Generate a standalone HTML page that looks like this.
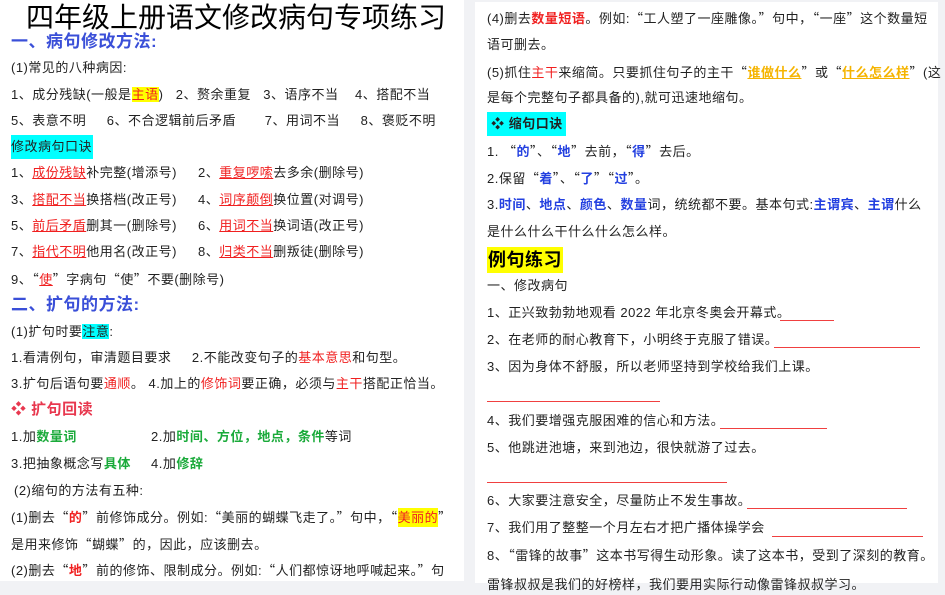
<!DOCTYPE html>
<html><head><meta charset="utf-8"><style>
body{margin:0;width:945px;height:581px;background:#f1f2f5;overflow:hidden;position:relative;font-family:"Liberation Sans","Noto Sans CJK SC",sans-serif;color:#222;}
.pg{position:absolute;background:#fff;top:0;height:581px}
.l{position:absolute;white-space:nowrap;font-size:13px;line-height:20px;height:20px;letter-spacing:0.5px}
.q{font-family:"Noto Sans CJK SC",sans-serif}
.r{color:#f02020}.u{text-decoration:underline}
.b{color:#2340e0;font-weight:bold}.g{color:#1aaa3a;font-weight:bold}
.y{color:#f5b400;font-weight:bold;text-decoration:underline}
.hl{background:#ffff00}.cy{background:#00ffff}
.h{color:#3a4fd8;font-weight:bold;font-size:17px}
.ln{position:absolute;height:1px;background:#f04040}
</style></head><body>
<div class="pg" style="left:0;width:464px"></div>
<div class="pg" style="left:475px;width:463px;top:2px"></div>

<div class="l" style="left:26px;top:2px;font-size:28px;line-height:32px;height:32px;color:#000;letter-spacing:0">四年级上册语文修改病句专项练习</div>
<div class="l h" style="left:11px;top:31px;line-height:22px">一、病句修改方法:</div>
<div class="l" style="left:11px;top:58px">(1)常见的八种病因:</div>
<div class="l" style="left:11px;top:85px">1、成分残缺(一般是<span class="hl r">主语</span>)&nbsp;&nbsp;&nbsp;2、赘余重复&nbsp;&nbsp;&nbsp;3、语序不当&nbsp;&nbsp;&nbsp;&nbsp;4、搭配不当</div>
<div class="l" style="left:11px;top:111px">5、表意不明&nbsp;&nbsp;&nbsp;&nbsp;&nbsp;6、不合逻辑前后矛盾&nbsp;&nbsp;&nbsp;&nbsp;&nbsp;&nbsp;&nbsp;7、用词不当&nbsp;&nbsp;&nbsp;&nbsp;&nbsp;8、褒贬不明</div>
<div class="l cy" style="left:11px;top:135px;height:24px;line-height:24px;padding-right:1px">修改病句口诀</div>
<div class="l" style="left:11px;top:163px">1、<span class="r u">成份残缺</span>补完整(增添号)</div>
<div class="l" style="left:198px;top:163px">2、<span class="r u">重复啰嗦</span>去多余(删除号)</div>
<div class="l" style="left:11px;top:190px">3、<span class="r u">搭配不当</span>换搭档(改正号)</div>
<div class="l" style="left:198px;top:190px">4、<span class="r u">词序颠倒</span>换位置(对调号)</div>
<div class="l" style="left:11px;top:216px">5、<span class="r u">前后矛盾</span>删其一(删除号)</div>
<div class="l" style="left:198px;top:216px">6、<span class="r u">用词不当</span>换词语(改正号)</div>
<div class="l" style="left:11px;top:242px">7、<span class="r u">指代不明</span>他用名(改正号)</div>
<div class="l" style="left:198px;top:242px">8、<span class="r u">归类不当</span>删叛徒(删除号)</div>
<div class="l" style="left:11px;top:269px">9、<span class="q">“</span><span class="r u">使</span><span class="q">”</span>字病句<span class="q">“</span>使<span class="q">”</span>不要(删除号)</div>
<div class="l h" style="left:11px;top:294px;line-height:22px">二、扩句的方法:</div>
<div class="l" style="left:11px;top:322px">(1)扩句时要<span class="cy">注意</span>:</div>
<div class="l" style="left:11px;top:348px">1.看清例句，审清题目要求&nbsp;&nbsp;&nbsp;&nbsp;&nbsp;2.不能改变句子的<span class="r">基本意思</span>和句型。</div>
<div class="l" style="left:11px;top:374px">3.扩句后语句要<span class="r">通顺</span>。&nbsp;4.加上的<span class="r">修饰词</span>要正确，必须与<span class="r">主干</span>搭配正恰当。</div>
<div class="l" style="left:11px;top:400px;font-size:15px;color:#e8384f;font-weight:bold">❖ 扩句回读</div>
<div class="l" style="left:11px;top:427px">1.加<span class="g">数量词</span></div>
<div class="l" style="left:151px;top:427px">2.加<span class="g">时间、方位，地点，条件</span>等词</div>
<div class="l" style="left:11px;top:454px">3.把抽象概念写<span class="g">具体</span></div>
<div class="l" style="left:151px;top:454px">4.加<span class="g">修辞</span></div>
<div class="l" style="left:14px;top:481px">(2)缩句的方法有五种:</div>
<div class="l" style="left:11px;top:507px">(1)删去<span class="q">“</span><span class="r" style="font-weight:bold">的</span><span class="q">”</span>前修饰成分。例如:<span class="q">“</span>美丽的蝴蝶飞走了。<span class="q">”</span>句中，<span class="q">“</span><span class="hl r" style="padding:2px 0">美丽的</span><span class="q">”</span></div>
<div class="l" style="left:11px;top:534px">是用来修饰<span class="q">“</span>蝴蝶<span class="q">”</span>的，因此，应该删去。</div>
<div class="l" style="left:11px;top:560px">(2)删去<span class="q">“</span><span class="r" style="font-weight:bold">地</span><span class="q">”</span>前的修饰、限制成分。例如:<span class="q">“</span>人们都惊讶地呼喊起来。<span class="q">”</span>句</div>

<div class="l" style="left:487px;top:8px">(4)删去<span class="r" style="font-weight:bold">数量短语</span>。例如:<span class="q">“</span>工人塑了一座雕像。<span class="q">”</span>句中，<span class="q">“</span>一座<span class="q">”</span>这个数量短</div>
<div class="l" style="left:487px;top:35px">语可删去。</div>
<div class="l" style="left:487px;top:62px">(5)抓住<span class="r">主干</span>来缩简。只要抓住句子的主干<span class="q">“</span><span class="y">谁做什么</span><span class="q">”</span>或<span class="q">“</span><span class="y">什么怎么样</span><span class="q">”</span>(这</div>
<div class="l" style="left:487px;top:88px">是每个完整句子都具备的),就可迅速地缩句。</div>
<div class="l cy" style="left:487px;top:112px;height:24px;line-height:24px;font-weight:bold;padding-right:3px">&nbsp;❖ 缩句口诀</div>
<div class="l" style="left:487px;top:141px">1.&nbsp;<span class="q">“</span><span class="b">的</span><span class="q">”</span>、<span class="q">“</span><span class="b">地</span><span class="q">”</span>去前，<span class="q">“</span><span class="b">得</span><span class="q">”</span>去后。</div>
<div class="l" style="left:487px;top:168px">2.保留<span class="q">“</span><span class="b">着</span><span class="q">”</span>、<span class="q">“</span><span class="b">了</span><span class="q">”“</span><span class="b">过</span><span class="q">”</span>。</div>
<div class="l" style="left:487px;top:195px">3.<span class="b">时间</span>、<span class="b">地点</span>、<span class="b">颜色</span>、<span class="b">数量</span>词，统统都不要。基本句式:<span class="b">主谓宾</span>、<span class="b">主谓</span>什么</div>
<div class="l" style="left:487px;top:222px">是什么什么干什么什么怎么样。</div>
<div class="l hl" style="left:487px;top:247px;height:26px;line-height:26px;font-size:18px;font-weight:bold;color:#000;padding:0 1px">例句练习</div>
<div class="l" style="left:487px;top:276px">一、修改病句</div>
<div class="l" style="left:487px;top:303px">1、正兴致勃勃地观看 2022 年北京冬奥会开幕式。</div>
<div class="ln" style="left:780px;top:320px;width:54px"></div>
<div class="l" style="left:487px;top:330px">2、在老师的耐心教育下，小明终于克服了错误。</div>
<div class="ln" style="left:774px;top:347px;width:146px"></div>
<div class="l" style="left:487px;top:357px">3、因为身体不舒服，所以老师坚持到学校给我们上课。</div>
<div class="ln" style="left:487px;top:401px;width:173px"></div>
<div class="l" style="left:487px;top:411px">4、我们要增强克服困难的信心和方法。</div>
<div class="ln" style="left:720px;top:428px;width:107px"></div>
<div class="l" style="left:487px;top:438px">5、他跳进池塘，来到池边，很快就游了过去。</div>
<div class="ln" style="left:487px;top:482px;width:240px"></div>
<div class="l" style="left:487px;top:491px">6、大家要注意安全，尽量防止不发生事故。</div>
<div class="ln" style="left:747px;top:508px;width:160px"></div>
<div class="l" style="left:487px;top:518px">7、我们用了整整一个月左右才把广播体操学会</div>
<div class="ln" style="left:772px;top:536px;width:151px"></div>
<div class="l" style="left:487px;top:545px">8、<span class="q">“</span>雷锋的故事<span class="q">”</span>这本书写得生动形象。读了这本书，受到了深刻的教育。</div>
<div class="l" style="left:487px;top:575px">雷锋叔叔是我们的好榜样，我们要用实际行动像雷锋叔叔学习。</div>
</body></html>
